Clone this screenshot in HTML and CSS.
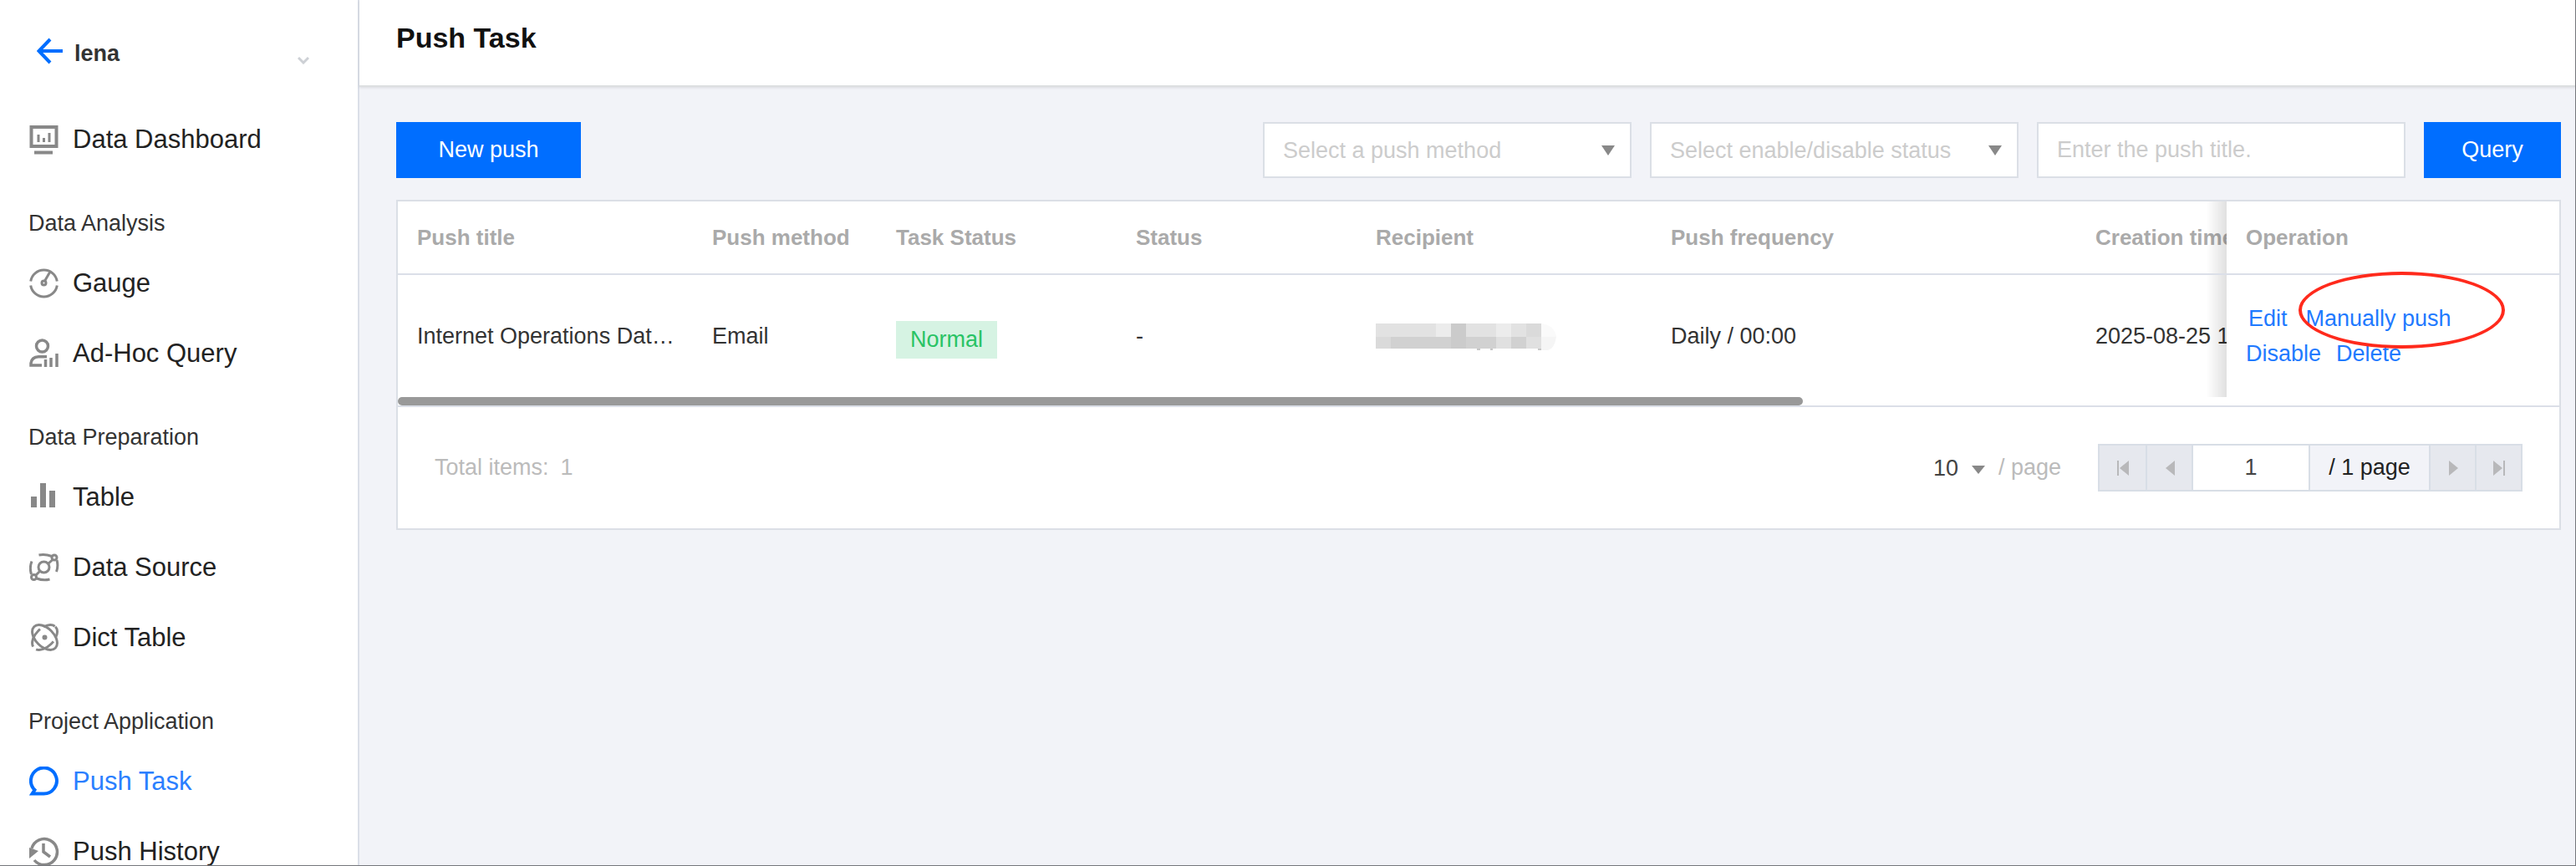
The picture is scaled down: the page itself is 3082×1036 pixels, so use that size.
FILE: index.html
```html
<!DOCTYPE html>
<html lang="en">

<head>
    <meta charset="UTF-8">
    <meta name="viewport" content="width=device-width, initial-scale=1.0">
    <title>Push Task</title>
    <link rel="stylesheet" href="styles.css">
</head>

<body>
    <aside class="sidebar">
        <div class="project">
            <a class="back" href="#" aria-label="Back">
                <svg viewBox="0 0 32 32" fill="none" stroke="currentColor" stroke-width="4">
                    <path d="M31 16H3M16 2L2.500 16L16 30" />
                </svg>
            </a>
            <span class="project-name">lena</span>
            <button class="project-toggle" type="button" aria-label="Switch project">
                <svg viewBox="0 0 14 10" fill="none" stroke="currentColor" stroke-width="3">
                    <path d="M1 2L7 8L13 2" />
                </svg>
            </button>
        </div>

        <nav class="menu">
            <a class="menu-item" href="#">
                <svg class="icon" viewBox="0 0 36 36" fill="none" stroke="currentColor">
                    <path stroke-width="4" d="M2.500 3H32.500V26H2.500ZM6 33.500H28" />
                    <path stroke-width="3" d="M11 12V21M17.500 16V21M24 10V21" />
                </svg>
                <span>Data Dashboard</span>
            </a>

            <h2 class="menu-title">Data Analysis</h2>
            <a class="menu-item" href="#">
                <svg class="icon" viewBox="0 0 36 36" fill="none" stroke="currentColor" stroke-width="3">
                    <path d="M1.700 15.500A16 16 0 0 1 33.300 15.500M1.700 20.500A16 16 0 0 0 33.300 20.500" />
                    <path d="M18 16L25 4" />
                    <circle cx="17.500" cy="17.500" r="2.500" />
                </svg>
                <span>Gauge</span>
            </a>
            <a class="menu-item" href="#">
                <svg class="icon" viewBox="0 0 36 36" fill="none" stroke="currentColor" stroke-width="3.500">
                    <circle cx="15.500" cy="9" r="7" />
                    <path d="M15 32H2V29.500Q3 22 11 21.800H21" />
                    <path d="M19.500 25V34M26 23V34M33 18V34" />
                </svg>
                <span>Ad-Hoc Query</span>
            </a>

            <h2 class="menu-title">Data Preparation</h2>
            <a class="menu-item" href="#">
                <svg class="icon" viewBox="0 0 36 36" fill="currentColor">
                    <path d="M2 17H9V30H2ZM13 1H20V30H13ZM24 10H31V30H24Z" />
                </svg>
                <span>Table</span>
            </a>
            <a class="menu-item" href="#">
                <svg class="icon" viewBox="0 0 36 36" fill="none" stroke="currentColor" stroke-width="3">
                    <circle cx="17.500" cy="17.500" r="6.500" />
                    <circle cx="30" cy="6" r="3" />
                    <circle cx="5.500" cy="29.500" r="3" />
                    <path d="M11.500 3Q19 1.500 27 4.500M24.500 32Q17 34 9 31M2.500 26Q0 18 3 10.500M33 9Q35 16 32.500 23" />
                    <path d="M28 8.500L23 13M8 27L12.500 22.500" />
                </svg>
                <span>Data Source</span>
            </a>
            <a class="menu-item" href="#">
                <svg class="icon" viewBox="0 0 36 36" fill="none" stroke="currentColor" stroke-width="3">
                    <ellipse cx="18.500" cy="17.500" rx="18" ry="11" transform="rotate(45 18.500 17.500)" />
                    <ellipse cx="18.500" cy="17.500" rx="18" ry="11" transform="rotate(-45 18.500 17.500)" stroke-dasharray="14 5 24 5 24 5 14" />
                    <circle cx="18.500" cy="17.500" r="1.500" />
                </svg>
                <span>Dict Table</span>
            </a>

            <h2 class="menu-title">Project Application</h2>
            <a class="menu-item active" href="#">
                <svg class="icon" viewBox="0 0 36 36" fill="none" stroke="currentColor" stroke-width="4">
                    <path d="M17.500 32.500H3.500L6.500 28A15.500 15.500 0 1 1 17.500 32.500Z" />
                </svg>
                <span>Push Task</span>
            </a>
            <a class="menu-item" href="#">
                <svg class="icon" viewBox="0 0 36 36" fill="none" stroke="currentColor" stroke-width="3.500">
                    <path d="M3 14A15.500 15.500 0 1 1 6 28M17 8V18L25 24" />
                    <path d="M0 13V26L11 17Z" fill="currentColor" stroke="none" />
                </svg>
                <span>Push History</span>
            </a>
        </nav>
    </aside>

    <main class="main">
        <header class="page-header">
            <h1>Push Task</h1>
        </header>

        <section class="content">
            <form class="toolbar">
                <button class="btn btn-new" type="button">New push</button>
                <div class="filters">
                    <div class="select-box">
                        <select aria-label="Push method">
                            <option>Select a push method</option>
                        </select>
                    </div>
                    <div class="select-box">
                        <select aria-label="Enable/disable status">
                            <option>Select enable/disable status</option>
                        </select>
                    </div>
                    <input class="search" type="text" placeholder="Enter the push title." aria-label="Push title">
                    <button class="btn" type="button">Query</button>
                </div>
            </form>

            <div class="card">
                <div class="table-scroll">
                    <table>
                        <colgroup>
                            <col class="col-title">
                            <col class="col-method">
                            <col class="col-status">
                            <col class="col-status">
                            <col class="col-recipient">
                            <col class="col-frequency">
                            <col>
                            <col class="col-operation">
                        </colgroup>
                        <thead>
                            <tr>
                                <th>Push title</th>
                                <th>Push method</th>
                                <th>Task Status</th>
                                <th>Status</th>
                                <th>Recipient</th>
                                <th>Push frequency</th>
                                <th>Creation time</th>
                                <th class="fixed">Operation</th>
                            </tr>
                        </thead>
                        <tbody>
                            <tr>
                                <td>Internet Operations Dat…</td>
                                <td>Email</td>
                                <td><span class="tag">Normal</span></td>
                                <td>-</td>
                                <td>
                                    <!-- masked address -->
                                    <svg class="masked" viewBox="0 0 216 34" role="img" aria-label="Hidden">
                                        <path fill="#e2e2e2" d="M0 2H198V18H0Z" />
                                        <path fill="#d1d1d1" d="M0 18H198V32H0Z" />
                                        <path fill="#ececec" d="M72 2H90V18H72ZM144 2H162V18H144Z" />
                                        <path fill="#cbcbcb" d="M90 2H108V32H90Z" />
                                        <path fill="#dadada" d="M180 2H198V18H180ZM0 18H18V32H0Z" />
                                        <path fill="#e0e0e0" d="M144 18H162V32H144ZM180 18H198V32H180Z" />
                                        <path fill="#fafafa" d="M198 2Q214 4 216 18H198Z" />
                                        <path fill="#f5f5f5" d="M198 18H216Q214 32 206 34H198Z" />
                                        <path fill="#c8c8c8" d="M121 32H125V34H121ZM137 32H140V34H137ZM194 32H198V34H194Z" />
                                    </svg>
                                </td>
                                <td>Daily / 00:00</td>
                                <td>2025-08-25 10:32:18</td>
                                <td class="fixed">
                                    <div class="links links-wide">
                                        <a href="#">Edit</a>
                                        <a class="marked" href="#">Manually push</a>
                                    </div>
                                    <div class="links">
                                        <a href="#">Disable</a>
                                        <a href="#">Delete</a>
                                    </div>
                                </td>
                            </tr>
                        </tbody>
                    </table>
                </div>
                <div class="scrollbar">
                    <div class="scrollbar-thumb"></div>
                </div>

                <footer class="pagination">
                    <div class="total"><span>Total items:</span><span>1</span></div>
                    <div class="page-size">
                        <div class="size-box">
                            <select aria-label="Items per page">
                                <option>10</option>
                            </select>
                        </div>
                        <span>/ page</span>
                    </div>
                    <div class="pager">
                        <button type="button" aria-label="First page" disabled>
                            <svg viewBox="0 0 16 20" fill="currentColor"><path d="M1 1H3V19H1ZM15 1V19L4 10Z" /></svg>
                        </button>
                        <button type="button" aria-label="Previous page" disabled>
                            <svg viewBox="0 0 16 20" fill="currentColor"><path d="M14 1V19L3 10Z" /></svg>
                        </button>
                        <input type="text" value="1" aria-label="Page number">
                        <span class="page-count">/ 1 page</span>
                        <button type="button" aria-label="Next page" disabled>
                            <svg viewBox="0 0 16 20" fill="currentColor"><path d="M3 1V19L14 10Z" /></svg>
                        </button>
                        <button type="button" aria-label="Last page" disabled>
                            <svg viewBox="0 0 16 20" fill="currentColor"><path d="M13 1H15V19H13ZM1 1V19L12 10Z" /></svg>
                        </button>
                    </div>
                </footer>
            </div>
        </section>
    </main>
</body>

</html>
```
FILE: styles.css
```css
/* Reset default margin and padding */
*,
*::before,
*::after {
    margin: 0;
    padding: 0;
    box-sizing: border-box;
}

body {
    display: flex;
    height: 100vh;
    overflow: hidden;
    font-family: "Liberation Sans", Arial, sans-serif;
    font-size: 27px;
    color: #333;
    background-color: #f2f3f8;
    border-right: 1px solid #75777c;
    border-bottom: 1px solid #75777c;
}

a {
    color: #006eff;
    text-decoration: none;
}

button,
input,
select {
    font-family: inherit;
    font-size: inherit;
    color: inherit;
}

/* Sidebar */
.sidebar {
    flex: none;
    width: 430px;
    overflow: hidden;
    background-color: #fff;
    border-right: 2px solid #dbdfe8;
}

.project {
    display: flex;
    align-items: center;
    height: 125px;
    padding: 4px 58px 0 44px;
}

.back svg {
    display: block;
    width: 32px;
    height: 32px;
    margin-bottom: 8px;
}

.project-name {
    flex: 1;
    margin-left: 13px;
    font-weight: bold;
}

.project-toggle {
    padding-top: 14px;
    color: #cdd0d5;
    background: none;
    border: none;
}

.project-toggle svg {
    display: block;
    width: 14px;
    height: 10px;
}

.menu-item {
    display: flex;
    align-items: center;
    gap: 16px;
    height: 84px;
    padding-left: 35px;
    font-size: 31px;
    color: #222;
}

.menu-item.active {
    color: #006eff;
}

.menu-item.active span {
    color: #2b7fff;
}

.icon {
    width: 36px;
    height: 36px;
    color: #888;
}

.active .icon {
    color: #006eff;
}

.menu-title {
    margin-top: 28px;
    padding-left: 34px;
    font-size: 27px;
    font-weight: normal;
    line-height: 60px;
}

/* Page header */
.main {
    flex: 1;
    min-width: 0;
}

.page-header {
    display: flex;
    align-items: center;
    height: 104px;
    padding: 0 44px 12px;
    background-color: #fff;
    border-bottom: 2px solid #dddfe1;
    box-shadow: 0 1px 3px rgba(0, 0, 0, 0.1);
}

.page-header h1 {
    font-size: 34px;
    color: #111;
}

.content {
    padding: 42px 17px 0 44px;
}

/* Toolbar */
.toolbar,
.filters {
    display: flex;
    justify-content: space-between;
    gap: 22px;
}

.btn {
    width: 164px;
    height: 67px;
    color: #fff;
    background-color: #006eff;
    border: none;
    cursor: pointer;
}

.btn-new {
    width: 221px;
}

.select-box,
.size-box {
    position: relative;
}

.select-box select,
.search {
    display: block;
    width: 441px;
    height: 67px;
    padding: 0 22px;
    color: #ccc;
    background-color: #fff;
    border: 2px solid #dbdfe6;
    border-radius: 0;
    appearance: none;
}

.search::placeholder {
    color: #ccc;
}

/* Drop-down arrow */
.select-box::after,
.size-box::after {
    content: "";
    position: absolute;
    top: 28px;
    right: 20px;
    border: 8px solid transparent;
    border-top: 12px solid #888;
    border-bottom: none;
    pointer-events: none;
}

/* Table */
.card {
    margin-top: 26px;
    background-color: #fff;
    border: 2px solid #dbdfe6;
}

.table-scroll {
    overflow: hidden;
}

table {
    width: 154%;
    table-layout: fixed;
    border-collapse: separate;
    border-spacing: 0;
}

.col-title,
.col-recipient {
    width: 353px;
}

.col-method {
    width: 220px;
}

.col-status {
    width: 287px;
}

.col-frequency {
    width: 508px;
}

.col-operation {
    width: 398px;
}

th,
td {
    padding: 0 23px;
    text-align: left;
    white-space: nowrap;
}

th {
    height: 88px;
    font-size: 26px;
    color: #aaa;
    border-bottom: 2px solid #dbdfe8;
}

td {
    height: 146px;
}

.tag {
    display: inline-block;
    margin-top: 8px;
    padding: 0 17px;
    line-height: 45px;
    color: #29c365;
    background-color: #d6f3e3;
}

.masked {
    display: block;
    width: 216px;
    height: 34px;
}

.fixed {
    position: sticky;
    right: 0;
    background-color: #fff;
}

.fixed::before {
    content: "";
    position: absolute;
    top: 0;
    bottom: 0;
    right: 100%;
    width: 24px;
    background: linear-gradient(to right, transparent, rgba(0, 0, 0, 0.12));
}

.links {
    display: flex;
    gap: 18px;
    line-height: 42px;
}

.links-wide {
    gap: 22px;
    padding-left: 3px;
}

.links a {
    color: #1f7aff;
}

.marked {
    position: relative;
}

/* Highlight ring around the manual push link */
.marked::after {
    content: "";
    position: absolute;
    top: -35px;
    left: -9px;
    width: 247px;
    height: 92px;
    border: 4px solid #ff2a1c;
    border-radius: 50%;
    pointer-events: none;
}

.scrollbar-thumb {
    width: 65%;
    height: 10px;
    border-radius: 5px;
    background-color: #999;
}

/* Pagination */
.pagination {
    display: flex;
    align-items: center;
    height: 147px;
    padding: 0 44px;
    color: #bbb;
    border-top: 2px solid #dbdfe8;
}

.total {
    display: flex;
    gap: 14px;
    flex: 1;
}

.page-size {
    display: flex;
    align-items: center;
    gap: 16px;
    margin-right: 44px;
}

.size-box select {
    display: block;
    width: 62px;
    color: #444;
    background: none;
    border: none;
    appearance: none;
}

.size-box::after {
    top: 12px;
    right: 0;
    border-top-width: 10px;
}

.pager {
    display: flex;
    height: 57px;
    border: 2px solid #d8dee6;
}

.pager > * + * {
    border: none;
    border-left: 2px solid #d8dee6;
}

.pager button {
    width: 55px;
    color: #b8b8ba;
    background-color: #e6e8ee;
}

.pager button:first-child {
    border: none;
}

.pager svg {
    display: block;
    width: 16px;
    height: 20px;
    margin: auto;
}

.pager input {
    width: 140px;
    color: #444;
    text-align: center;
    background-color: #fff;
}

.page-count {
    width: 144px;
    line-height: 53px;
    text-align: center;
    color: #222;
    background-color: #f2f3f8;
}
```
